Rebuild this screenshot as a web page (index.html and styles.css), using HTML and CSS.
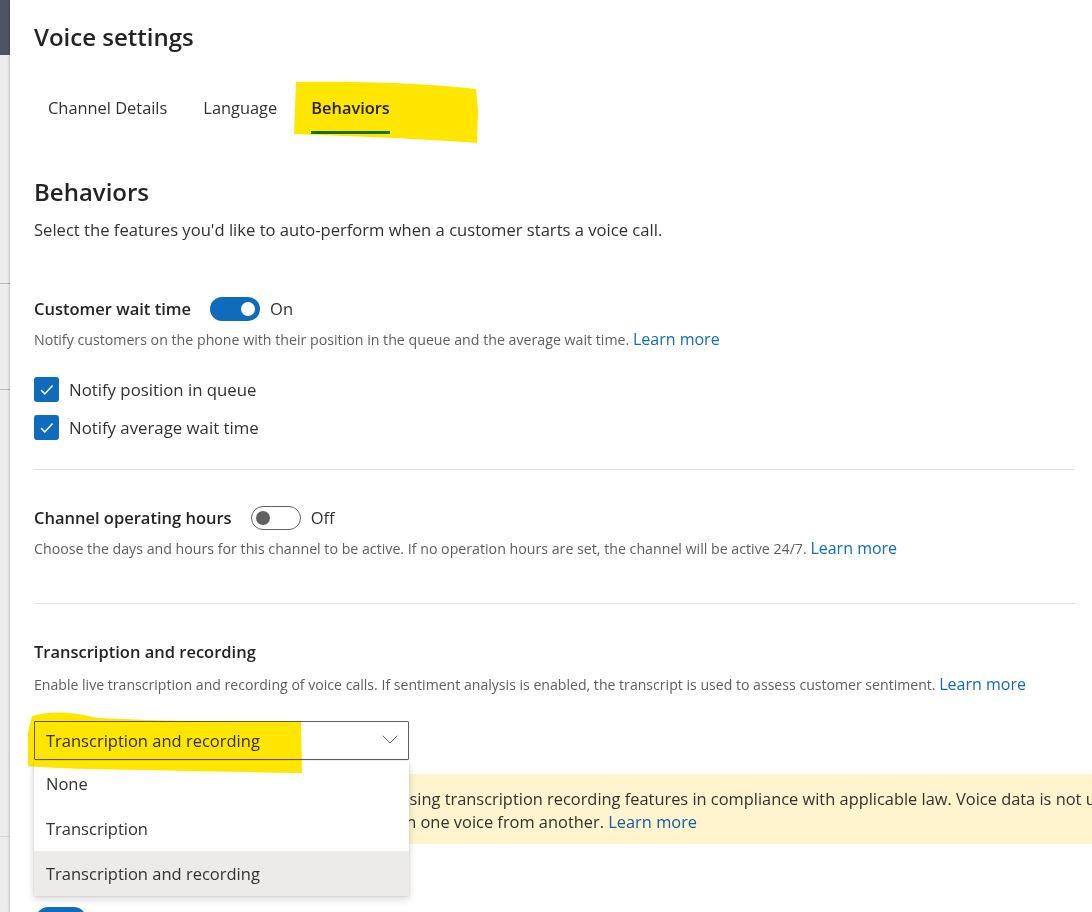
FILE: index.html
```html
<!DOCTYPE html>
<html lang="en">
<head>
<meta charset="utf-8">
<title>Voice settings</title>
<link rel="stylesheet" href="styles.css">
</head>
<body>
<div class="screen">
  <div class="page-edge">
    <div class="edge-top"></div>
    <div class="edge-rule edge-rule-1"></div>
    <div class="edge-rule edge-rule-2"></div>
    <div class="edge-rule edge-rule-3"></div>
  </div>
  <main class="panel">
    <h1 class="title">Voice settings</h1>

    <nav class="tabs">
      <span class="tab"><span class="tab-label">Channel Details</span></span>
      <span class="tab"><span class="tab-label">Language</span></span>
      <span class="tab tab-active"><span class="tab-label">Behaviors</span></span>
    </nav>

    <h2 class="section-title">Behaviors</h2>
    <p class="lead">Select the features you'd like to auto-perform when a customer starts a voice call.</p>

    <section class="setting setting-wait">
      <div class="setting-head">
        <h3 class="setting-name">Customer wait time</h3>
        <span class="toggle toggle-on"><span class="knob"></span></span>
        <span class="toggle-state">On</span>
      </div>
      <p class="hint">Notify customers on the phone with their position in the queue and the average wait time. <a class="link" href="#">Learn more</a></p>
      <ul class="checks">
        <li class="check"><span class="checkbox"><svg viewBox="0 0 24 24" width="25" height="25"><path d="M6.8 12.6l3.6 3.6 7.4-8" fill="none" stroke="#fff" stroke-width="1.4"/></svg></span>Notify position in queue</li>
        <li class="check"><span class="checkbox"><svg viewBox="0 0 24 24" width="25" height="25"><path d="M6.8 12.6l3.6 3.6 7.4-8" fill="none" stroke="#fff" stroke-width="1.4"/></svg></span>Notify average wait time</li>
      </ul>
    </section>

    <hr class="divider divider-1">

    <section class="setting setting-hours">
      <div class="setting-head">
        <h3 class="setting-name">Channel operating hours</h3>
        <span class="toggle toggle-off"><span class="knob"></span></span>
        <span class="toggle-state">Off</span>
      </div>
      <p class="hint">Choose the days and hours for this channel to be active. If no operation hours are set, the channel will be active 24/7. <a class="link" href="#">Learn more</a></p>
    </section>

    <hr class="divider divider-2">

    <section class="setting setting-transcription">
      <h3 class="setting-name setting-name-block">Transcription and recording</h3>
      <p class="hint hint-block">Enable live transcription and recording of voice calls. If sentiment analysis is enabled, the transcript is used to assess customer sentiment. <a class="link" href="#">Learn more</a></p>

      <div class="dropdown-wrap">
        <div class="dropdown">
          <span class="dropdown-value">Transcription and recording</span>
          <svg class="chevron" viewBox="0 0 16 9" width="16" height="9"><path d="M0.7 0.7l7.3 7.3 7.3-7.3" fill="none" stroke="#605e5c" stroke-width="1"/></svg>
        </div>
        <ul class="menu">
          <li class="menu-item">None</li>
          <li class="menu-item">Transcription</li>
          <li class="menu-item menu-item-hover">Transcription and recording</li>
        </ul>
      </div>

      <div class="message-bar">
        <span class="message-line">Please be aware that you are responsible for using transcription recording features in compliance with applicable law. Voice data is not used to train models and is not</span>
        <span class="message-line">used for voice recognition, the ability to discern one voice from another. <a class="link link-dark" href="#">Learn more</a></span>
      </div>
    </section>

    <section class="setting setting-next">
      <span class="toggle toggle-on"><span class="knob"></span></span>
    </section>

    <svg class="marker marker-tabs" viewBox="0 0 200 70" width="200" height="70" preserveAspectRatio="none">
      <path d="M2 1 C60 0 130 2 182 8 L184 30 L183 62 C130 58 60 55 0 53 Z" fill="#ffe600"/>
    </svg>
    <svg class="marker marker-dropdown" viewBox="0 0 280 62" width="280" height="62" preserveAspectRatio="none">
      <path d="M4 4 C20 -1 40 -1 70 6 C130 9 200 10 273 10 L274 61 C200 60 120 58 60 57 C30 56 10 55 0 54 L0 20 Z" fill="#ffe600"/>
    </svg>
  </main>
</div>
</body>
</html>
```

FILE: styles.css
```css
* { box-sizing: border-box; }

html, body {
  margin: 0;
  padding: 0;
  width: 1092px;
  height: 912px;
  overflow: hidden;
  background: #ffffff;
}

body {
  font-family: "Open Sans", "Noto Sans", "Liberation Sans", sans-serif;
  color: #323130;
}

.screen {
  display: flex;
  height: 912px;
}

.page-edge {
  position: relative;
  width: 10px;
  flex: 0 0 10px;
  background: #ececec;
}

.edge-top {
  height: 55px;
  background: #4e5464;
}

.edge-rule {
  position: absolute;
  left: 0;
  width: 10px;
  height: 1px;
  background: #b8b8b8;
}
.edge-rule-1 { top: 283px; }
.edge-rule-2 { top: 389px; }
.edge-rule-3 { top: 836px; background: #c9d8ea; }

.panel {
  position: relative;
  flex: 1 1 auto;
  min-width: 0;
  padding: 21px 17px 0 24px;
  background: #ffffff;
  box-shadow: -1px 0 2px rgba(0, 0, 0, 0.18);
  overflow: hidden;
}

.title {
  margin: 0;
  font-size: 24px;
  line-height: 32px;
  font-weight: 600;
  color: #242424;
}

.tabs {
  display: flex;
  margin-top: 32px;
}

.tab {
  padding: 0 17px;
  font-size: 16.4px;
  color: #323130;
}
.tab:first-child { padding: 0 19px 0 14px; }

.tab-label {
  display: block;
  line-height: 46px;
  border-bottom: 3px solid transparent;
}

.tab-active .tab-label {
  font-weight: 600;
  color: #242424;
  border-bottom-color: #107c10;
}

.section-title {
  margin: 42px 0 0;
  font-size: 24px;
  line-height: 32px;
  font-weight: 600;
  color: #242424;
}

.lead {
  margin: 10px 0 0;
  font-size: 16.6px;
  line-height: 24px;
  color: #323130;
}

.setting-wait { margin-top: 55px; }
.setting-hours { margin-top: 36px; }
.setting-transcription { margin-top: 36px; }

.setting-head {
  display: flex;
  align-items: center;
  height: 24px;
}

.setting-name {
  margin: 0 19px 0 0;
  font-size: 16.5px;
  line-height: 24px;
  font-weight: 600;
  color: #242424;
}

.setting-name-block { margin: 0; }

.toggle {
  position: relative;
  display: flex;
  align-items: center;
  width: 50px;
  height: 24px;
  border-radius: 12px;
  flex: 0 0 50px;
}

.toggle-on {
  background: #0f6cbd;
  justify-content: flex-end;
  padding-right: 5px;
}

.toggle-off {
  border: 1px solid #616161;
  background: #ffffff;
  padding-left: 4px;
}

.knob {
  width: 14px;
  height: 14px;
  border-radius: 50%;
}
.toggle-on .knob { background: #ffffff; }
.toggle-off .knob { background: #616161; }

.toggle-state {
  margin-left: 10px;
  font-size: 16.5px;
  line-height: 24px;
  color: #323130;
}

.hint {
  margin: 8px 0 0;
  font-size: 14.2px;
  line-height: 20px;
  color: #605e5c;
}

.hint-block { margin-top: 10px; font-size: 14.1px; }

.link {
  color: #0f6cbd;
  text-decoration: none;
  font-size: 16px;
}

.link-dark { color: #115ea3; }

.checks {
  list-style: none;
  margin: 27px 0 0;
  padding: 0;
  display: flex;
  flex-direction: column;
  gap: 13px;
}

.check {
  display: flex;
  align-items: center;
  height: 25px;
  font-size: 16.8px;
  color: #323130;
}

.checkbox {
  display: flex;
  width: 25px;
  height: 25px;
  margin-right: 10px;
  border-radius: 3px;
  background: #0f6cbd;
}

.divider {
  margin: 0;
  border: 0;
  height: 1px;
  background: #e1dfdd;
}
.divider-1 { margin-top: 29px; }
.divider-2 { margin-top: 44px; }

.dropdown-wrap {
  position: relative;
  width: 375px;
  margin-top: 26px;
  z-index: 2;
}

.dropdown {
  display: flex;
  align-items: center;
  justify-content: space-between;
  height: 39px;
  padding: 0 10px 0 11px;
  border: 1px solid #605e5c;
  border-radius: 1px;
  background: #ffffff;
}

.dropdown-value {
  font-size: 16.5px;
  color: #323130;
}

.chevron { margin-top: -2px; }

.menu {
  position: absolute;
  top: 40px;
  left: 0;
  width: 375px;
  margin: 0;
  padding: 0;
  list-style: none;
  background: #ffffff;
  box-shadow: 0 3px 8px rgba(0, 0, 0, 0.16), 0 0 2px rgba(0, 0, 0, 0.12);
}

.menu-item {
  height: 45px;
  line-height: 45px;
  padding-left: 12px;
  font-size: 16.5px;
  color: #323130;
}

.menu-item-hover { background: #edebe9; }

.message-bar {
  display: flex;
  flex-direction: column;
  margin: 14px -17px 0 0;
  height: 70px;
  padding: 13px 0 0 21px;
  background: #fff4ce;
  white-space: nowrap;
  overflow: hidden;
}

.message-line {
  display: block;
  font-size: 16.4px;
  line-height: 23px;
  color: #323130;
}

.message-line .link { font-size: inherit; }

.setting-next {
  margin-top: 63px;
  padding-left: 2px;
}

.marker {
  position: absolute;
  mix-blend-mode: multiply;
  pointer-events: none;
  z-index: 3;
}

.marker-tabs {
  left: 284px;
  top: 81px;
}

.marker-dropdown {
  left: 18px;
  top: 712px;
}
```
